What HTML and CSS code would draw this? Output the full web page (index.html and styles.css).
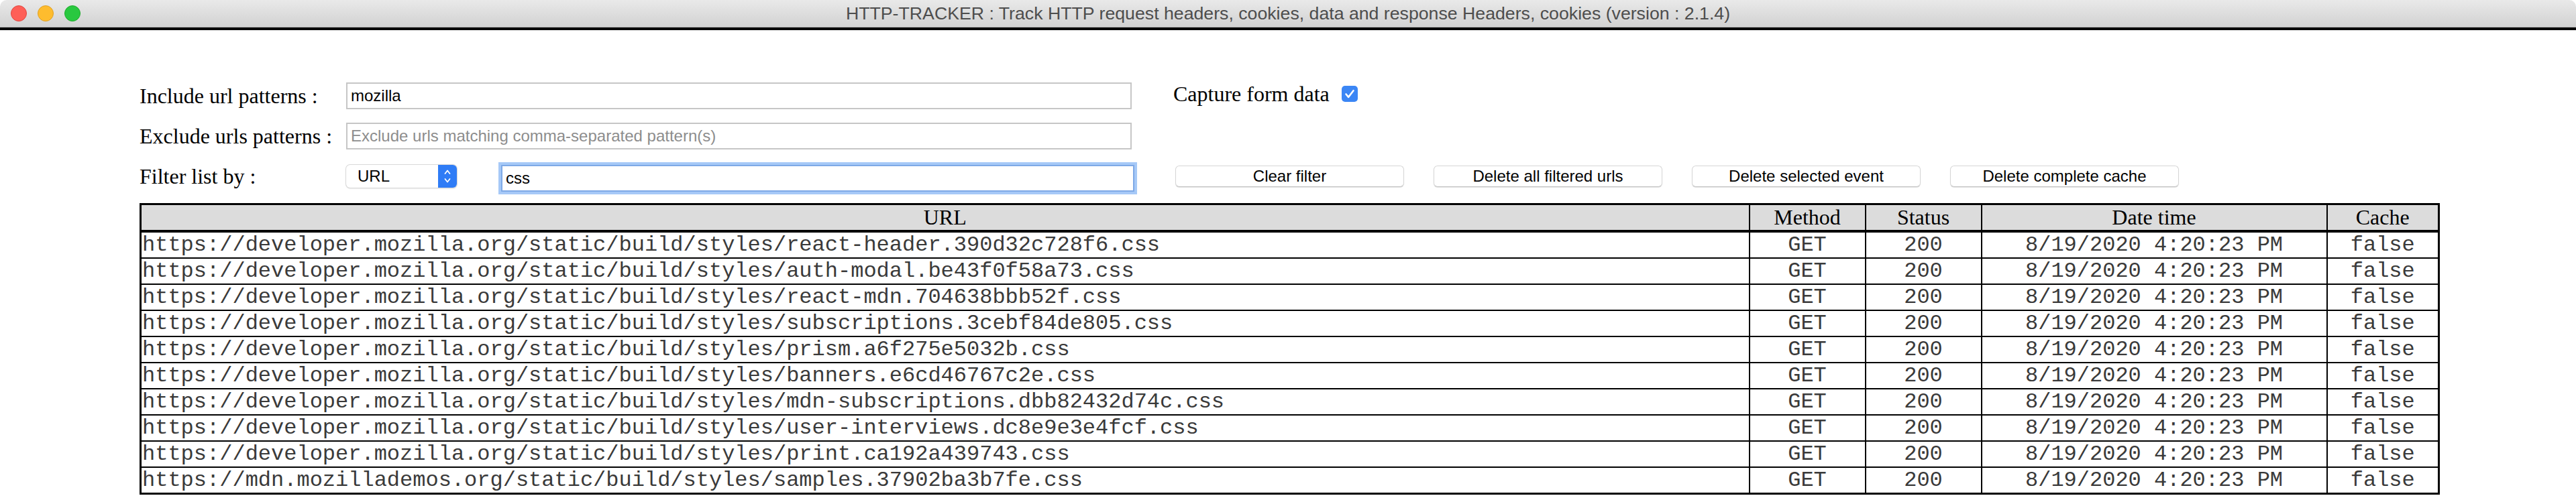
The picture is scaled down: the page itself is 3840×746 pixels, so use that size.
FILE: index.html
```html
<!DOCTYPE html>
<html lang="en">
<head>
<meta charset="utf-8">
<title>HTTP-TRACKER</title>
<link rel="stylesheet" href="styles.css">
</head>
<body>
<div class="window">
  <header class="titlebar">
    <div class="lights">
      <span class="light red"></span>
      <span class="light yellow"></span>
      <span class="light green"></span>
    </div>
    <div class="title">HTTP-TRACKER : Track HTTP request headers, cookies, data and response Headers, cookies (version : 2.1.4)</div>
    <div></div>
  </header>
  <div class="band"></div>
  <main class="content">
    <form class="controls">
      <label class="lbl">Include url patterns :</label>
      <input class="field" type="text" value="mozilla">
      <div class="capture">
        <span>Capture form data</span>
        <span class="check"><svg viewBox="0 0 24 24" width="24" height="24"><path d="M6.5 12.5 L10.2 16.8 L17.5 7.2" fill="none" stroke="#fff" stroke-width="2.6" stroke-linecap="round" stroke-linejoin="round"/></svg></span>
      </div>

      <label class="lbl">Exclude urls patterns :</label>
      <input class="field" type="text" placeholder="Exclude urls matching comma-separated pattern(s)">
      <div></div>

      <label class="lbl">Filter list by :</label>
      <div class="filter-pair">
        <div class="select">
          <span class="select-text">URL</span>
          <span class="arrows"><svg viewBox="0 0 28 34" width="28" height="34"><path d="M10.5 13 L14 8.5 L17.5 13" fill="none" stroke="#fff" stroke-width="1.8" stroke-linecap="round" stroke-linejoin="round"/><path d="M10.5 21 L14 25.5 L17.5 21" fill="none" stroke="#fff" stroke-width="1.8" stroke-linecap="round" stroke-linejoin="round"/></svg></span>
        </div>
        <input class="field focused" type="text" value="css">
      </div>
      <div class="buttons">
        <button type="button" class="btn">Clear filter</button>
        <button type="button" class="btn">Delete all filtered urls</button>
        <button type="button" class="btn">Delete selected event</button>
        <button type="button" class="btn">Delete complete cache</button>
      </div>
    </form>

    <table class="grid">
      <colgroup>
        <col class="c-url"><col class="c-method"><col class="c-status"><col class="c-date"><col class="c-cache">
      </colgroup>
      <thead>
        <tr><th>URL</th><th>Method</th><th>Status</th><th>Date time</th><th>Cache</th></tr>
      </thead>
      <tbody>
        <tr><td class="url">https://developer.mozilla.org/static/build/styles/react-header.390d32c728f6.css</td><td>GET</td><td>200</td><td>8/19/2020 4:20:23 PM</td><td>false</td></tr>
        <tr><td class="url">https://developer.mozilla.org/static/build/styles/auth-modal.be43f0f58a73.css</td><td>GET</td><td>200</td><td>8/19/2020 4:20:23 PM</td><td>false</td></tr>
        <tr><td class="url">https://developer.mozilla.org/static/build/styles/react-mdn.704638bbb52f.css</td><td>GET</td><td>200</td><td>8/19/2020 4:20:23 PM</td><td>false</td></tr>
        <tr><td class="url">https://developer.mozilla.org/static/build/styles/subscriptions.3cebf84de805.css</td><td>GET</td><td>200</td><td>8/19/2020 4:20:23 PM</td><td>false</td></tr>
        <tr><td class="url">https://developer.mozilla.org/static/build/styles/prism.a6f275e5032b.css</td><td>GET</td><td>200</td><td>8/19/2020 4:20:23 PM</td><td>false</td></tr>
        <tr><td class="url">https://developer.mozilla.org/static/build/styles/banners.e6cd46767c2e.css</td><td>GET</td><td>200</td><td>8/19/2020 4:20:23 PM</td><td>false</td></tr>
        <tr><td class="url">https://developer.mozilla.org/static/build/styles/mdn-subscriptions.dbb82432d74c.css</td><td>GET</td><td>200</td><td>8/19/2020 4:20:23 PM</td><td>false</td></tr>
        <tr><td class="url">https://developer.mozilla.org/static/build/styles/user-interviews.dc8e9e3e4fcf.css</td><td>GET</td><td>200</td><td>8/19/2020 4:20:23 PM</td><td>false</td></tr>
        <tr><td class="url">https://developer.mozilla.org/static/build/styles/print.ca192a439743.css</td><td>GET</td><td>200</td><td>8/19/2020 4:20:23 PM</td><td>false</td></tr>
        <tr><td class="url">https://mdn.mozillademos.org/static/build/styles/samples.37902ba3b7fe.css</td><td>GET</td><td>200</td><td>8/19/2020 4:20:23 PM</td><td>false</td></tr>
      </tbody>
    </table>
  </main>
</div>
</body>
</html>
```

FILE: styles.css
```css
* { box-sizing: border-box; }

html, body {
  margin: 0;
  padding: 0;
  background: #ffffff;
}

body {
  font-family: "Liberation Serif", "Times New Roman", serif;
  font-size: 32px;
  color: #000;
}

.window {
  width: 3840px;
  background: #fff;
}

/* ---------- title bar ---------- */
.titlebar {
  height: 41px;
  display: grid;
  grid-template-columns: 1fr auto 1fr;
  align-items: center;
  background: linear-gradient(#e9e9e9, #d2d2d2);
  border-bottom: 1px solid #b3b3b3;
  border-top-left-radius: 10px;
  border-top-right-radius: 10px;
}

.lights {
  display: flex;
  gap: 16px;
  padding-left: 16px;
}

.light {
  width: 24px;
  height: 24px;
  border-radius: 50%;
  display: block;
}
.light.red { background: #fe5f57; border: 1px solid #e2463f; }
.light.yellow { background: #febc2e; border: 1px solid #dfa023; }
.light.green { background: #29c840; border: 1px solid #1dac2a; }

.title {
  font-family: "Liberation Sans", Arial, sans-serif;
  font-size: 26.7px;
  color: #4d4d4d;
  white-space: nowrap;
}

.band {
  height: 4px;
  background: #000;
}

/* ---------- content ---------- */
.content {
  padding: 68px 206px 0 208px;
}

.controls {
  display: grid;
  grid-template-columns: 308px 1233px auto;
  grid-auto-rows: 60px;
  align-items: center;
}

.lbl {
  font-size: 32px;
  white-space: nowrap;
}

.field {
  width: 1171px;
  height: 40px;
  border: 2px solid #c6c6c6;
  padding: 2px 5px;
  font-family: "Liberation Sans", Arial, sans-serif;
  font-size: 24px;
  color: #000;
  background: #fff;
  outline: none;
}
.field::placeholder { color: #8d8d8d; }

.field.focused {
  width: 944px;
  border: 2px solid #7ea9e6;
  box-shadow: 0 0 0 4px #a6c9f7;
  margin-top: 6px;
}

.capture {
  display: flex;
  align-items: center;
  gap: 18px;
  margin-top: -6px;
}

.check {
  width: 24px;
  height: 24px;
  border-radius: 5px;
  background: #3b86f5;
  display: flex;
}

.filter-pair {
  display: flex;
  align-items: center;
  gap: 66px;
}

.select {
  width: 165px;
  height: 34px;
  display: flex;
  align-items: center;
  justify-content: space-between;
  background: #fff;
  border-radius: 6px;
  box-shadow: 0 0 0 1px #d9d9d9, 0 1px 2px rgba(0,0,0,0.25);
  font-family: "Liberation Sans", Arial, sans-serif;
  font-size: 24px;
  overflow: hidden;
}
.select-text { padding-left: 17px; }
.arrows {
  width: 28px;
  height: 34px;
  background: #2f7cf6;
  display: flex;
}

.buttons {
  display: flex;
  gap: 44px;
  margin-left: 3px;
}

.btn {
  width: 341px;
  height: 32px;
  background: #fff;
  border: 1px solid #d6d6d6;
  border-bottom-color: #c2c2c2;
  border-radius: 6px;
  box-shadow: 0 1px 1px rgba(0,0,0,0.12);
  font-family: "Liberation Sans", Arial, sans-serif;
  font-size: 24px;
  color: #000;
  padding: 0;
}

/* ---------- table ---------- */
.grid {
  margin-top: 10px;
  width: 3426px;
  border-collapse: collapse;
  table-layout: fixed;
  border: 3px solid #000;
}

.c-url { width: 2398px; }
.c-method { width: 173px; }
.c-status { width: 173px; }
.c-date { width: 515px; }
.c-cache { width: 167px; }

.grid th {
  background: #dcdcdc;
  font-family: "Liberation Serif", "Times New Roman", serif;
  font-weight: normal;
  font-size: 32px;
  line-height: 37px;
  height: 39px;
  padding: 0;
  border: 2px solid #000;
  border-bottom-width: 4px;
  text-align: center;
}

.grid td {
  font-family: "Liberation Mono", "Courier New", monospace;
  font-size: 32px;
  line-height: 37px;
  padding: 0;
  border: 2px solid #000;
  text-align: center;
  color: #3a3a3a;
  white-space: nowrap;
  overflow: hidden;
}

.grid td.url {
  text-align: left;
  padding-left: 1px;
}
```
